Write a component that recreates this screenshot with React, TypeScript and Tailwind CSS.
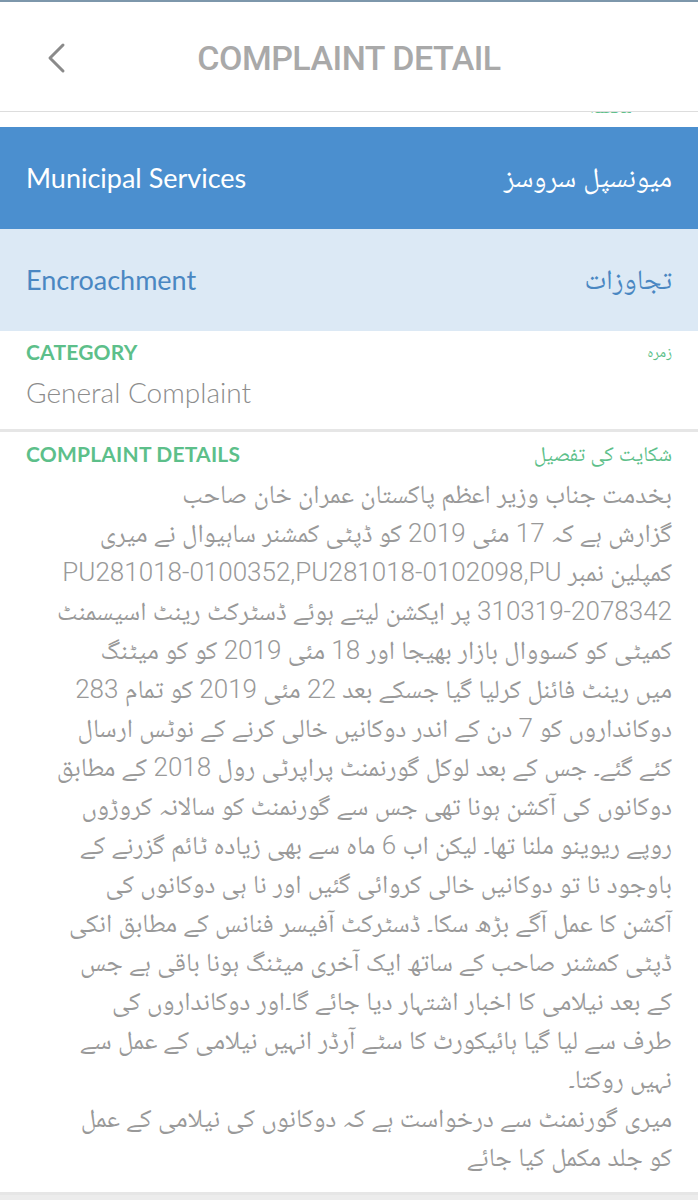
import React from "react";

const urduFont = {
  fontFamily:
    "Roboto, 'Noto Naskh Arabic', 'Noto Sans Arabic', 'DejaVu Sans', sans-serif",
};

// complaint body, one entry per visual line as in the app
const detailLines = [
  "بخدمت جناب وزیر اعظم پاکستان عمران خان صاحب",
  "گزارش ہے کہ 17 مئی 2019 کو ڈپٹی کمشنر ساہیوال نے میری",
  "کمپلین نمبر PU281018-0100352,PU281018-0102098,PU",
  "310319-2078342 پر ایکشن لیتے ہوئے ڈسٹرکٹ رینٹ اسیسمنٹ",
  "کمیٹی کو کسووال بازار بھیجا اور 18 مئی 2019 کو کو میٹنگ",
  "میں رینٹ فائنل کرلیا گیا جسکے بعد 22 مئی 2019 کو تمام 283",
  "دوکانداروں کو 7 دن کے اندر دوکانیں خالی کرنے کے نوٹس ارسال",
  "کئے گئے۔ جس کے بعد لوکل گورنمنٹ پراپرٹی رول 2018 کے مطابق",
  "دوکانوں کی آکشن ہونا تھی جس سے گورنمنٹ کو سالانہ کروڑوں",
  "روپے ریوینو ملنا تھا۔ لیکن اب 6 ماہ سے بھی زیادہ ٹائم گزرنے کے",
  "باوجود نا تو دوکانیں خالی کروائی گئیں اور نا ہی دوکانوں کی",
  "آکشن کا عمل آگے بڑھ سکا۔ ڈسٹرکٹ آفیسر فنانس کے مطابق انکی",
  "ڈپٹی کمشنر صاحب کے ساتھ ایک آخری میٹنگ ہونا باقی ہے جس",
  "کے بعد نیلامی کا اخبار اشتہار دیا جائے گا۔اور دوکانداروں کی",
  "طرف سے لیا گیا ہائیکورٹ کا سٹے آرڈر انہیں نیلامی کے عمل سے",
  "نہیں روکتا۔",
  "میری گورنمنٹ سے درخواست ہے کہ دوکانوں کی نیلامی کے عمل",
  "کو جلد مکمل کیا جائے",
];

function BackIcon() {
  return (
    <svg width="22" height="32" viewBox="0 0 22 32" fill="none" aria-hidden>
      <path
        d="M17 3 L4 16 L17 29"
        stroke="#8a8a8a"
        strokeWidth="3"
        strokeLinecap="round"
        strokeLinejoin="round"
      />
    </svg>
  );
}

export default function App() {
  return (
    <div
      className="w-[698px] min-h-[1200px] bg-[#ececec]"
      style={{ fontFamily: "Lato, 'DejaVu Sans', sans-serif" }}
    >
      <div className="h-[2px] bg-[#7d97ab]" />

      {/* Kopfzeile */}
      <div className="h-[110px] bg-white flex items-center border-b border-[#dddddd]">
        <div className="w-[120px] pl-[46px] pt-[2px] flex items-center">
          <BackIcon />
        </div>
        <div
          className="flex-1 text-center text-[34px] font-medium text-[#a9a9a9] tracking-[-0.5px] pt-[4px]"
          style={{ fontFamily: "Roboto, sans-serif" }}
        >
          COMPLAINT DETAIL
        </div>
        <div className="w-[120px]" />
      </div>

      {/* halb verdeckte Zeile unter der Kopfzeile */}
      <div className="h-[15px] bg-white overflow-hidden px-[26px]">
        <div
          dir="rtl"
          className="mt-[-16px] pr-[40px] text-[17px] leading-[22px] text-[#5dbf8a]"
          style={urduFont}
        >
          محکمہ
        </div>
      </div>

      <div className="h-[102px] bg-[#4b8fcf] px-[26px] flex items-center justify-between">
        <span className="text-[27px] text-white">Municipal Services</span>
        <span dir="rtl" className="text-[28px] text-white" style={urduFont}>
          میونسپل سروسز
        </span>
      </div>

      <div className="h-[102px] bg-[#dce9f5] px-[26px] flex items-center justify-between">
        <span className="text-[27px] text-[#4a87c2]">Encroachment</span>
        <span dir="rtl" className="text-[28px] text-[#4a87c2]" style={urduFont}>
          تجاوزات
        </span>
      </div>

      {/* Kategorie */}
      <div className="bg-white px-[26px] pt-[10px] pb-[20px] border-b-[3px] border-[#e6e6e6]">
        <div className="flex items-center justify-between leading-[22px]">
          <span className="text-[21px] font-bold text-[#5dbf8a] tracking-[0.2px]">CATEGORY</span>
          <span dir="rtl" className="text-[15px] text-[#5dbf8a]" style={urduFont}>
            زمره
          </span>
        </div>
        <div className="mt-[12px] text-[28px] leading-[34px] text-[#8c8c8c] font-light">
          General Complaint
        </div>
      </div>

      {/* Beschwerdetext */}
      <div className="bg-white px-[26px] pt-[11px] pb-[15px] border-b-[3px] border-[#e6e6e6]">
        <div className="flex items-center justify-between leading-[22px]">
          <span className="text-[21px] font-bold text-[#5dbf8a] tracking-[0.2px]">
            COMPLAINT DETAILS
          </span>
          <span dir="rtl" className="text-[21px] text-[#5dbf8a]" style={urduFont}>
            شکایت کی تفصیل
          </span>
        </div>
        <div className="mt-[10px] font-light" style={urduFont}>
          {detailLines.map((line, i) => (
            <div
              key={i}
              dir="rtl"
              className="text-right whitespace-nowrap text-[26px] leading-[39px] text-[#999999]"
            >
              {line}
            </div>
          ))}
        </div>
      </div>
    </div>
  );
}
